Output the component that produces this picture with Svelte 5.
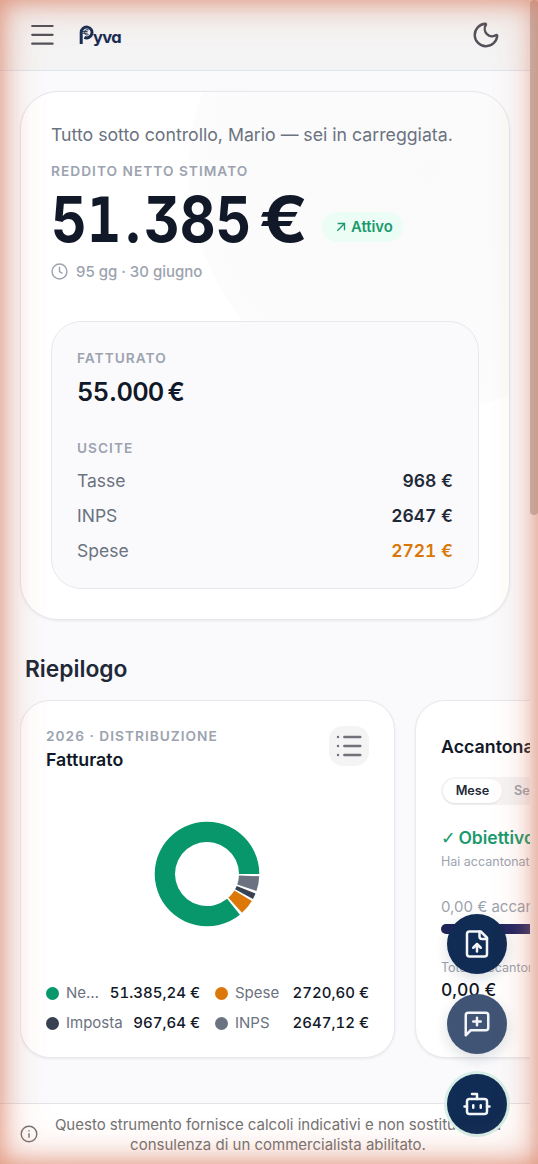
<script>
  const expenses = [
    { label: 'Tasse', value: '968 €' },
    { label: 'INPS', value: '2647 €' },
    { label: 'Spese', value: '2721 €', warn: true }
  ];
  const legend = [
    { label: 'Netto', value: '51.385,24 €', color: '#07976a' },
    { label: 'Spese', value: '2720,60 €', color: '#dc780a' },
    { label: 'Imposta', value: '967,64 €', color: '#374151' },
    { label: 'INPS', value: '2647,12 €', color: '#6b7280' }
  ];
  const slices = [
    { from: 2.5, to: 19, color: '#6b7280' },
    { from: 22, to: 28.5, color: '#374151' },
    { from: 31, to: 48, color: '#dc780a' },
    { from: 51, to: 360, color: '#07976a' }
  ];
  function arc({ from, to }) {
    const p = (r, a) => {
      const t = (a * Math.PI) / 180;
      return `${(53 + r * Math.cos(t)).toFixed(2)} ${(53 + r * Math.sin(t)).toFixed(2)}`;
    };
    const big = to - from > 180 ? 1 : 0;
    return `M${p(52.3, from)}A52.3 52.3 0 ${big} 1 ${p(52.3, to)}L${p(32, to)}A32 32 0 ${big} 0 ${p(32, from)}Z`;
  }
</script>

<div class="app">
  <header>
    <svg class="menu" width="24" height="22" viewBox="0 0 24 22" fill="none" stroke="currentColor" stroke-width="2.2" stroke-linecap="round"><path d="M2.2 2h20.4M2.2 10.8h20.4M2.2 19.7h20.4" /></svg>
    <div class="logo">
      <svg width="15" height="20" viewBox="0 0 15 20" fill="none" stroke="currentColor"><path d="M2.2 19V7.4a5.4 5.4 0 1 1 3.2 5" stroke-width="3" /><path d="M9.6 5a2.7 2.7 0 1 0 0 4.6M3.6 6.4h5M3.6 8.2h5" stroke-width="1" /></svg>
      <span>yva</span>
    </div>
    <svg class="moon" width="30" height="30" viewBox="0 0 24 24" fill="none" stroke="currentColor" stroke-width="1.9" stroke-linecap="round" stroke-linejoin="round"><path d="M20.985 12.486a9 9 0 1 1-9.473-9.472c.405-.022.617.46.402.803a6 6 0 0 0 8.268 8.268c.344-.215.825-.004.803.401" /></svg>
  </header>

  <main>
    <section class="hero">
      <p class="greeting">Tutto sotto controllo, Mario — sei in carreggiata.</p>
      <div class="eyebrow">Reddito netto stimato</div>
      <div class="net">
        <strong><span class="digits">5<span class="one">1</span><span class="dot">.</span>385</span><span class="euro">&nbsp;€</span></strong>
        <span class="badge">
          <svg width="10" height="10" viewBox="0 0 12 12" fill="none" stroke="currentColor" stroke-width="1.6"><path d="M1.6 10.4l8.4-8.4M2 1.8h8.2V10" /></svg>
          Attivo
        </span>
      </div>
      <div class="deadline">
        <svg width="17" height="17" viewBox="0 0 18 18" fill="none" stroke="currentColor" stroke-width="1.5" stroke-linecap="round"><circle cx="9" cy="9" r="7.9" /><path d="M9 4.6V9l2.8 1.6" /></svg>
        95 gg · 30 giugno
      </div>
      <div class="panel">
        <div class="eyebrow">Fatturato</div>
        <div class="revenue">55<span class="dot">.</span>000&nbsp;€</div>
        <div class="eyebrow">Uscite</div>
        <div class="rows">
          {#each expenses as e}
            <div class="row"><span>{e.label}</span><b class:warn={e.warn}>{e.value}</b></div>
          {/each}
        </div>
      </div>
    </section>

    <h2>Riepilogo</h2>

    <div class="carousel">
      <article class="card chart">
        <div class="head">
          <div>
            <div class="eyebrow">2026 · Distribuzione</div>
            <h3>Fatturato</h3>
          </div>
          <button aria-label="Elenco">
            <svg width="28" height="24" viewBox="0 0 28 24" fill="none" stroke="currentColor" stroke-width="2.4" stroke-linecap="round"><path d="M9.3 3h16M9.3 12h16M9.3 21h16" /><path d="M3 3h.01M3 12h.01M3 21h.01" /></svg>
          </button>
        </div>
        <svg class="donut" width="106" height="106" viewBox="0 0 106 106">
          {#each slices as s}<path d={arc(s)} fill={s.color} />{/each}
        </svg>
        <div class="legend">
          {#each legend as l}
            <div class="item"><i style="background:{l.color}"></i><span>{l.label}</span><b>{l.value}</b></div>
          {/each}
        </div>
      </article>

      <article class="card saving">
        <h3>Accantonamento</h3>
        <div class="tabs"><span class="on">Mese</span><span>Settimana</span></div>
        <div class="goal"><span>✓</span> Obiettivo raggiunto</div>
        <div class="note">Hai accantonato abbastanza</div>
        <div class="saved">0,00 € accantonati</div>
        <div class="bar"></div>
        <div class="note">Totale accantonato</div>
        <div class="total">0,00 €</div>
      </article>
    </div>
  </main>

  <footer>
    <svg width="18" height="18" viewBox="0 0 18 18" fill="none" stroke="currentColor" stroke-width="1.4" stroke-linecap="round"><circle cx="9" cy="9" r="7.8" /><path d="M9 8.7v3.6M9 5.8v.1" /></svg>
    <p>Questo strumento fornisce calcoli indicativi e non sostituisce la consulenza di un commercialista abilitato.</p>
  </footer>

  <div class="fabs">
    <button aria-label="Carica file">
      <svg viewBox="0 0 24 24"><path d="M15 2H6a2 2 0 0 0-2 2v16a2 2 0 0 0 2 2h12a2 2 0 0 0 2-2V7Z" /><path d="M14 2v4a2 2 0 0 0 2 2h4M12 12v6M15 15l-3-3-3 3" /></svg>
    </button>
    <button class="faded" aria-label="Feedback">
      <svg viewBox="0 0 24 24"><path d="M21 15a2 2 0 0 1-2 2H7l-4 4V5a2 2 0 0 1 2-2h14a2 2 0 0 1 2 2zM12 7v6M9 10h6" /></svg>
    </button>
    <button class="bot" aria-label="Assistente">
      <svg viewBox="0 0 24 24"><path d="M12 8V4H8" /><rect width="16" height="12" x="4" y="8" rx="2" /><path d="M2 14h2M20 14h2M15 13v2M9 13v2" /></svg>
    </button>
  </div>

  <div class="scrollbar"></div>
  <div class="glow"></div>
</div>

<style>
  :global(body) { margin: 0; }
  * { box-sizing: border-box; }
  .app {
    position: relative;
    width: 538px;
    height: 1164px;
    padding-right: 8px;
    overflow: hidden;
    display: flex;
    flex-direction: column;
    background: #fafafc;
    color: #111827;
    font-family: Inter, sans-serif;
  }
  p, h2, h3 { margin: 0; }
  button { border: 0; padding: 0; }
  svg { display: block; flex: none; }

  header {
    height: 71px;
    flex: none;
    display: flex;
    align-items: center;
    padding: 0 29px 0 30px;
    background: #f4f4f4;
    border-bottom: 1px solid #dfe5ee;
    color: #52525b;
  }
  .logo { display: flex; align-items: center; margin-left: 25px; color: #172e54; }
  .logo span {
    font-size: 16.5px;
    line-height: 20px;
    font-weight: 700;
    font-feature-settings: 'cv11';
    letter-spacing: -0.6px;
    margin: 4px 0 0 -1px;
  }
  .moon { margin-left: auto; }

  main { flex: 1; min-height: 0; padding: 20px 20px 0; }

  .hero {
    position: relative;
    height: 529px;
    padding: 32px 30px 0;
    border: 1px solid #e5e7eb;
    border-radius: 38px;
    background: radial-gradient(circle 240px at 408px 78px, #fafafa 0, #fbfbfb 60%, #fcfcfc 99.7%, #fff 100%);
    box-shadow: 0 1px 3px rgba(0, 0, 0, 0.07);
  }
  .greeting { font-size: 17.72px; line-height: 22px; color: #6b7280; white-space: nowrap; }
  .eyebrow {
    font-size: 13.7px;
    line-height: 18px;
    font-weight: 600;
    letter-spacing: 1.02px;
    text-transform: uppercase;
    color: #9ca3af;
  }
  .hero > .eyebrow { margin-top: 16px; }
  .net { display: flex; align-items: center; gap: 17px; margin-top: 8px; height: 62px; }
  .net strong {
    display: flex;
    width: 254px;
    padding-top: 1px;
    font-size: 63px;
    line-height: 62px;
    font-weight: 700;
    white-space: nowrap;
  }
  .digits {
    width: 199px;
    font-feature-settings: 'tnum', 'cv09';
    transform: scaleX(0.88);
    transform-origin: 0 50%;
  }
  .one { font-family: 'DejaVu Sans Mono', monospace; letter-spacing: 2px; line-height: 1; }
  .digits .dot { margin: 0 4px; }
  .euro { letter-spacing: 0; word-spacing: -7px; transform: scaleX(1.14); transform-origin: 0 50%; }
  .badge {
    display: flex;
    align-items: center;
    gap: 5px;
    height: 30px;
    margin-top: 15px;
    padding: 0 10px 0 14px;
    border-radius: 15px;
    background: #ecfdf5;
    color: #199a6c;
    font-size: 14.8px;
    font-weight: 600;
  }
  .deadline {
    display: flex;
    align-items: center;
    gap: 8px;
    margin-top: 11px;
    height: 20px;
    color: #9ca3af;
    font-size: 15px;
    font-weight: 500;
  }
  .panel {
    height: 268px;
    margin-top: 40px;
    padding: 27px 25px 0;
    border: 1px solid #e7e8eb;
    border-radius: 30px;
    background: #fafafc;
  }
  .revenue {
    margin: 9px 0 31px;
    font-size: 25.5px;
    line-height: 32px;
    font-weight: 600;
    letter-spacing: -0.8px;
    word-spacing: -2px;
    font-variant-numeric: tabular-nums;
  }
  .revenue .dot { margin: 0 1px; }
  .rows { display: flex; flex-direction: column; gap: 11px; margin-top: 12px; }
  .row { display: flex; justify-content: space-between; font-size: 17.5px; line-height: 24px; color: #6b7280; }
  .row b { font-weight: 600; color: #1f2937; font-variant-numeric: tabular-nums; }
  .row b.warn { color: #d97706; }

  h2 { margin: 34px 5px 0; font-size: 22.8px; line-height: 30px; font-weight: 600; color: #1f2937; }
  h3 { font-size: 17.8px; line-height: 24px; font-weight: 600; }

  .carousel { display: flex; gap: 20px; width: 510px; margin-top: 16px; padding-bottom: 4px; overflow: hidden; }
  .card {
    flex: none;
    width: 375px;
    height: 358px;
    border: 1px solid #e8e9ec;
    border-radius: 30px;
    background: #fff;
    box-shadow: 0 1px 3px rgba(0, 0, 0, 0.07);
  }
  .chart { padding: 25px 25px 0; display: flex; flex-direction: column; }
  .head { display: flex; justify-content: space-between; }
  .head .eyebrow { margin-top: 1px; }
  .head h3 { margin-top: 3px; }
  .head button {
    display: grid;
    place-items: center;
    width: 40px;
    height: 40px;
    border-radius: 14px;
    background: #f4f4f5;
    color: #71717a;
  }
  .donut { margin: 49px auto 0 108px; }
  .legend { display: grid; grid-template-columns: 154px 154px; gap: 10px 15px; margin-top: 56px; }
  .item { display: flex; align-items: center; font-size: 15px; line-height: 20px; color: #6b7280; white-space: nowrap; }
  .item i { flex: none; width: 13px; height: 13px; border-radius: 50%; margin-right: 7px; }
  .item span { flex: 1; min-width: 0; overflow: hidden; text-overflow: ellipsis; }
  .item b { margin-left: 10px; font-weight: 500; color: #111827; font-variant-numeric: tabular-nums; }

  .saving { padding: 34px 25px 0; white-space: nowrap; }
  .tabs {
    display: flex;
    align-items: center;
    height: 28px;
    width: 240px;
    margin-top: 18px;
    padding: 2px;
    border-radius: 14px;
    background: #f4f4f5;
    font-size: 12.7px;
    font-weight: 600;
    color: #9ca3af;
  }
  .tabs span { padding: 0 12px; line-height: 24px; }
  .tabs .on { width: 59px; padding: 0; text-align: center; border-radius: 12px; background: #fff; color: #1f2937; box-shadow: 0 1px 2px rgba(0, 0, 0, 0.08); }
  .goal { height: 25px; margin-top: 20px; font-size: 17.5px; line-height: 25px; font-weight: 600; color: #199a6c; }
  .goal span { display: inline-block; width: 13px; font-family: 'DejaVu Sans', sans-serif; line-height: 1; }
  .note { margin-top: 3px; font-size: 12.5px; line-height: 18px; color: #9ca3af; }
  .saved { margin-top: 25px; font-size: 15px; line-height: 22px; color: #9ca3af; }
  .bar { width: 260px; height: 10px; margin-top: 6px; border-radius: 5px; background: linear-gradient(90deg, #1e2558, #312e81); }
  .bar + .note { margin-top: 25px; }
  .total { margin-top: 1px; font-size: 17.5px; line-height: 24px; font-weight: 500; font-variant-numeric: tabular-nums; }

  footer {
    flex: none;
    display: flex;
    align-items: center;
    gap: 15px;
    height: 61px;
    padding: 0 27px 0 20px;
    border-top: 1px solid #e2e4e8;
    background: #fff;
    color: #737373;
  }
  footer p { flex: 1; padding-top: 2px; font-size: 15px; line-height: 20px; text-align: center; }

  .fabs { position: absolute; left: 447px; top: 914px; display: flex; flex-direction: column; gap: 20px; }
  .fabs button {
    display: grid;
    place-items: center;
    width: 60px;
    height: 60px;
    border-radius: 50%;
    background: #112c54;
    box-shadow: 0 5px 14px rgba(15, 30, 60, 0.14);
  }
  .fabs .faded { background: #405576; }
  .fabs .bot { box-shadow: 0 0 0 3px #d7efe7; }
  .fabs svg { width: 30px; height: 30px; fill: none; stroke: #f3f5f8; stroke-width: 2; stroke-linecap: round; stroke-linejoin: round; }

  .scrollbar { position: absolute; right: 0; top: 0; width: 8px; height: 515px; border-radius: 4px; background: #c1c1c1; }
  .glow {
    position: absolute;
    inset: 0;
    pointer-events: none;
    box-shadow:
      inset 0 0 22px rgba(217, 119, 87, 0.65),
      inset 0 0 40px rgba(217, 119, 87, 0.4),
      inset 0 0 57px rgba(217, 119, 87, 0.08);
  }
</style>
